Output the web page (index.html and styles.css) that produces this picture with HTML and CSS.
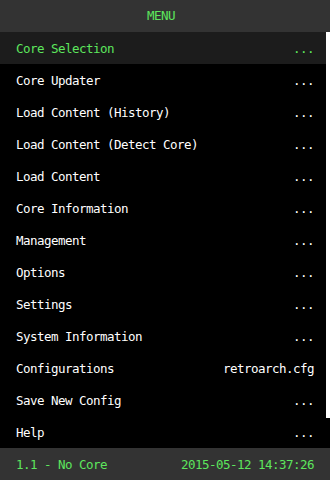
FILE: index.html
```html
<!DOCTYPE html>
<html lang="en">
<head>
  <meta charset="UTF-8">
  <title>MENU</title>
  <link rel="stylesheet" href="styles.css">
</head>
<body>
  <div class="screen">
    <div class="header">MENU</div>

    <div class="body">
      <ul class="menu">
        <li class="item selected"><span>Core Selection</span><span>...</span></li>
        <li class="item"><span>Core Updater</span><span>...</span></li>
        <li class="item"><span>Load Content (History)</span><span>...</span></li>
        <li class="item"><span>Load Content (Detect Core)</span><span>...</span></li>
        <li class="item"><span>Load Content</span><span>...</span></li>
        <li class="item"><span>Core Information</span><span>...</span></li>
        <li class="item"><span>Management</span><span>...</span></li>
        <li class="item"><span>Options</span><span>...</span></li>
        <li class="item"><span>Settings</span><span>...</span></li>
        <li class="item"><span>System Information</span><span>...</span></li>
        <li class="item"><span>Configurations</span><span>retroarch.cfg</span></li>
        <li class="item"><span>Save New Config</span><span>...</span></li>
        <li class="item"><span>Help</span><span>...</span></li>
      </ul>
      <div class="scrollbar"><div class="thumb"></div></div>
    </div>

    <div class="footer">
      <span>1.1 - No Core</span>
      <span>2015-05-12 14:37:26</span>
    </div>
  </div>
</body>
</html>
```

FILE: styles.css
```css
body {
  margin: 0;
  background: #000;
  font-family: "DejaVu Sans Mono", "Liberation Mono", monospace;
  font-size: 12.5px;
  letter-spacing: -0.53px;
  color: #fff;
}

.screen {
  width: 330px;
  height: 480px;
  display: flex;
  flex-direction: column;
}

.header {
  height: 32px;
  line-height: 32px;
  background: #333;
  color: #5de65d;
  text-align: center;
  padding-right: 8px;
}

.body {
  flex: 1;
  display: flex;
}

.menu {
  flex: 1;
  list-style: none;
  margin: 0;
  padding: 0;
}

.item {
  height: 32px;
  display: flex;
  align-items: center;
  justify-content: space-between;
  padding: 0 12px 0 16px;
}

.item.selected {
  background: #1c1c1c;
  color: #5de65d;
}

.scrollbar {
  width: 4px;
}

.thumb {
  height: 386px;
  background: #fff;
}

.footer {
  height: 32px;
  background: #333;
  color: #5de65d;
  display: flex;
  align-items: center;
  justify-content: space-between;
  padding: 0 16px;
}
```
